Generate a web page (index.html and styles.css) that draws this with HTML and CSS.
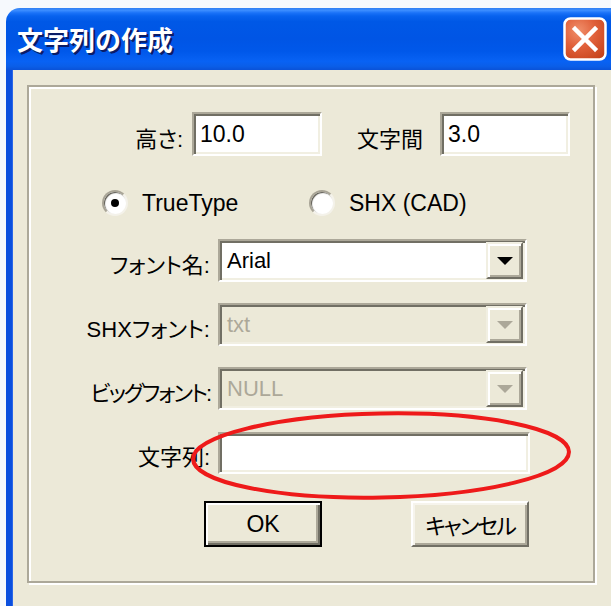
FILE: index.html
```html
<!DOCTYPE html>
<html lang="ja">
<head>
<meta charset="utf-8">
<title>文字列の作成</title>
<link rel="stylesheet" href="styles.css">
</head>
<body>
<div class="window">
  <div class="titlebar">
    <span class="title">文字列の作成</span>
    <span class="close" aria-label="閉じる">
      <svg width="44" height="44" viewBox="0 0 44 44">
        <defs>
          <radialGradient id="closeFill" cx="0.35" cy="0.3" r="0.9">
            <stop offset="0" stop-color="#f0906c"/>
            <stop offset="0.45" stop-color="#e0603a"/>
            <stop offset="1" stop-color="#c23e16"/>
          </radialGradient>
        </defs>
        <rect x="1.5" y="1.5" width="41" height="41" rx="6" ry="6" fill="url(#closeFill)" stroke="#ffffff" stroke-width="2.5"/>
        <path d="M12 12 L32 32 M32 12 L12 32" stroke="#ffffff" stroke-width="4.5" stroke-linecap="square"/>
      </svg>
    </span>
  </div>
  <div class="client">
    <div class="group">
      <div class="row-size">
        <span class="lbl lbl-height">高さ:</span>
        <div class="edit edit-short">10.0</div>
        <span class="lbl lbl-pitch">文字間</span>
        <div class="edit edit-short">3.0</div>
      </div>

      <div class="row-radio">
        <span class="radio-item radio-first">
          <span class="radio checked"></span>
          <span class="radio-text">TrueType</span>
        </span>
        <span class="radio-item">
          <span class="radio"></span>
          <span class="radio-text">SHX (CAD)</span>
        </span>
      </div>

      <div class="fields">
        <span class="lbl">フォント名:</span>
        <div class="combo">
          <span class="combo-text">Arial</span>
          <span class="drop"><svg width="16" height="8" viewBox="0 0 16 8"><path d="M0 0 H16 L8 8 Z" fill="#000"/></svg></span>
        </div>

        <span class="lbl">SHXフォント:</span>
        <div class="combo disabled">
          <span class="combo-text">txt</span>
          <span class="drop"><svg width="16" height="8" viewBox="0 0 16 8"><path d="M0 0 H16 L8 8 Z" fill="#aca899"/></svg></span>
        </div>

        <span class="lbl lbl-tight">ビッグフォント:</span>
        <div class="combo disabled">
          <span class="combo-text">NULL</span>
          <span class="drop"><svg width="16" height="8" viewBox="0 0 16 8"><path d="M0 0 H16 L8 8 Z" fill="#aca899"/></svg></span>
        </div>

        <span class="lbl">文字列:</span>
        <div class="edit edit-wide"></div>
      </div>

      <div class="buttons">
        <span class="btn btn-default"><span>OK</span></span>
        <span class="btn btn-cancel"><span class="btn-tight">キャンセル</span></span>
      </div>
    </div>
  </div>
</div>

<!-- red hand-drawn ring around the string field -->
<svg class="mark" width="611" height="606" viewBox="0 0 611 606">
  <ellipse cx="381" cy="455.5" rx="188" ry="42" transform="rotate(-1.1 381 455.5)" fill="none" stroke="#ee1a1a" stroke-width="4"/>
</svg>
</body>
</html>
```

FILE: styles.css
```css
html, body {
  margin: 0;
  padding: 0;
  width: 611px;
  height: 606px;
  overflow: hidden;
  background: #f6f9fd;
}

body {
  position: relative;
  font-family: "Liberation Sans", "Noto Sans CJK JP", sans-serif;
  font-size: 22px;
  color: #000;
  font-feature-settings: "palt";
}

/* window frame */
.window {
  margin: 8px 0 0 6px;
  width: 620px;
}

.titlebar {
  height: 62px;
  box-sizing: border-box;
  border-radius: 14px 14px 0 0;
  background: linear-gradient(to bottom,
    #2f7ff3 0%, #3a8cff 4%, #1a72f8 8%, #0862ee 13%,
    #0058e6 22%, #0055e5 50%, #0058ea 70%, #0862f4 86%,
    #0a5ee8 94%, #0a52d8 100%);
  display: flex;
  align-items: center;
  justify-content: space-between;
  padding: 0 19px 0 11px;
}

.title {
  color: #fff;
  font-family: "Noto Sans CJK JP", sans-serif;
  font-weight: bold;
  font-size: 26px;
  text-shadow: 2px 2px 0 #0a1c66;
  font-feature-settings: normal;
  margin-top: -1px;
}

.close {
  width: 44px;
  height: 44px;
  display: block;
  margin-top: -1px;
}
.close svg { display: block; }

.client {
  height: 532px;
  background: #ece9d8;
  border-left: 6px solid #0b4fde;
  border-bottom: 4px solid #0a4bd8;
  box-shadow: inset 1px 0 0 #2a66e8;
  padding: 15px 0 0 15px;
}

/* etched group frame */
.group {
  width: 568px;
  height: 498px;
  box-sizing: border-box;
  border: 2px solid #aca899;
  box-shadow: inset 2px 2px 0 #fff, 2px 2px 0 #fff;
}

.lbl {
  white-space: nowrap;
  padding-top: 5px;
}
.lbl-tight { letter-spacing: -2px; }

/* sunken text field */
.edit {
  box-sizing: border-box;
  height: 44px;
  background: #fff;
  border: 2px solid;
  border-color: #aca899 #fff #fff #aca899;
  box-shadow: inset 2px 2px 0 #716f64, inset -2px -2px 0 #f1efe2;
  padding: 0 6px;
  display: flex;
  align-items: center;
  font-size: 23px;
}

.row-size {
  display: flex;
  align-items: center;
  margin-top: 25px;
  height: 44px;
}
.lbl-height {
  width: 154px;
  text-align: right;
  margin-right: 9px;
}
.edit-short { width: 130px; }
.lbl-pitch {
  margin-left: 35px;
  margin-right: 17px;
  width: 66px;
}

/* radio options */
.row-radio {
  display: flex;
  align-items: center;
  margin-top: 34px;
  height: 26px;
  padding-left: 73px;
}
.radio-item {
  display: flex;
  align-items: center;
  gap: 14px;
}
.radio-first { width: 207px; }
.radio-text { font-size: 23px; }
.radio {
  width: 26px;
  height: 26px;
  box-sizing: border-box;
  border-radius: 50%;
  background: #fff;
  border: 2px solid;
  border-color: #a8a496 #f4f2ea #f4f2ea #a8a496;
  box-shadow: inset 1px 1px 1px #55534a;
  position: relative;
}
.radio.checked::after {
  content: "";
  position: absolute;
  left: 7px;
  top: 7px;
  width: 8px;
  height: 8px;
  border-radius: 50%;
  background: #000;
}

/* label / control grid */
.fields {
  display: grid;
  grid-template-columns: 181px 312px;
  grid-auto-rows: 43px;
  column-gap: 8px;
  row-gap: 21px;
  margin-top: 23px;
  align-items: center;
}
.fields .lbl { justify-self: end; }

.combo {
  box-sizing: border-box;
  width: 309px;
  height: 43px;
  background: #fff;
  border: 2px solid;
  border-color: #aca899 #fff #fff #aca899;
  box-shadow: inset 2px 2px 0 #716f64, inset -2px -2px 0 #f1efe2;
  display: flex;
  align-items: center;
  justify-content: space-between;
  padding: 2px 2px 2px 7px;
}
.combo.disabled {
  background: #ece9d8;
  color: #aca899;
}
.combo-text { font-size: 22px; }

.drop {
  box-sizing: border-box;
  width: 37px;
  height: 37px;
  background: #ece9d8;
  border: 2px solid;
  border-color: #f1efe2 #716f64 #716f64 #f1efe2;
  box-shadow: inset 2px 2px 0 #fff, inset -2px -2px 0 #aca899;
  display: flex;
  align-items: center;
  justify-content: center;
}
.drop svg { display: block; }

.edit-wide {
  width: 312px;
  height: 42px;
}

/* push buttons */
.buttons {
  display: flex;
  margin-top: 27px;
  padding-left: 175px;
  gap: 89px;
}
.btn {
  box-sizing: border-box;
  width: 118px;
  height: 46px;
  background: #ece9d8;
  display: flex;
  align-items: center;
  justify-content: center;
  font-size: 22px;
}
.btn-tight { letter-spacing: -2px; }
.btn-default {
  border: 2px solid #000;
  box-shadow: inset 2px 2px 0 #fff, inset -2px -2px 0 #716f64, inset -4px -4px 0 #aca899;
  font-size: 23px;
}
.btn-cancel {
  border: 2px solid;
  border-color: #fff #716f64 #716f64 #fff;
  box-shadow: inset 2px 2px 0 #f6f4ec, inset -2px -2px 0 #aca899;
}

.mark {
  position: absolute;
  left: 0;
  top: 0;
  pointer-events: none;
}
```
